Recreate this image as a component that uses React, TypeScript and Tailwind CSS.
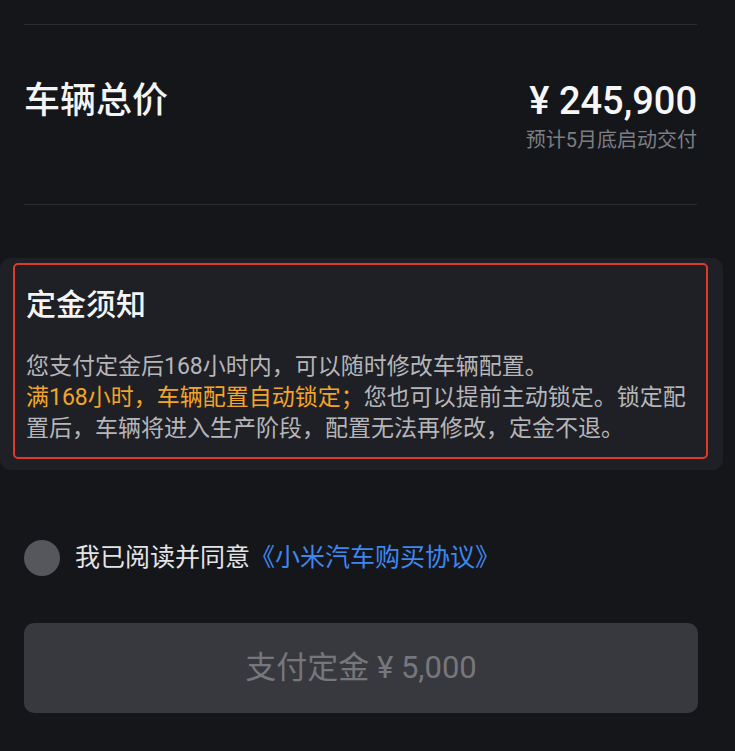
import React from 'react';

const font = { fontFamily: 'Roboto, "Noto Sans CJK SC", sans-serif' };

export default function App() {
  return (
    <div className="min-h-[751px] w-full bg-[#15161a] overflow-hidden" style={font}>
      {/* price summary */}
      <div className="ml-6 w-[673px]">
        <div className="h-px mt-6 bg-[#2a2b30]" />
        <div className="flex items-start justify-between pt-[56px] pb-[52px]">
          <h2 className="text-[36px] leading-[40px] font-medium text-[#f4f4f5]">车辆总价</h2>
          <div className="flex flex-col items-end">
            <div className="text-[38px] leading-[40px] font-medium text-[#f7f7f8]">¥ 245,900</div>
            <div className="mt-[7px] text-[20px] leading-[24px] text-[#7d7e83]">预计5月底启动交付</div>
          </div>
        </div>
        <div className="h-px bg-[#2a2b30]" />
      </div>

      {/* deposit notice */}
      <div className="mt-[53px] w-[723px] rounded-[10px] bg-[#1f2025] pt-[5px] pl-[13px] pr-[15px] pb-[11px]">
        <div className="rounded-[5px] border-2 border-[#e03a27] pl-[11px] pr-[10px] pt-[22px] pb-[13px]">
          <h3 className="text-[30px] leading-[36px] font-medium text-[#f4f4f5]">定金须知</h3>
          <div className="mt-[28px] text-[23px] leading-[31px] text-[#b6b6ba]">
            <p>您支付定金后168小时内，可以随时修改车辆配置。</p>
            <p>
              <span className="text-[#f2a52a]">满168小时，车辆配置自动锁定；</span>您也可以提前主动锁定。锁定配置后，车辆将进入生产阶段，配置无法再修改，定金不退。
            </p>
          </div>
        </div>
      </div>

      {/* agreement */}
      <div className="ml-6 mt-[70px] flex items-center gap-[15px]">
        <button className="h-9 w-9 rounded-full bg-[#56575c]" />
        <p className="text-[25px] leading-[36px] text-[#e4e4e6]">
          我已阅读并同意<span className="text-[#3d87f0]">《小米汽车购买协议》</span>
        </p>
      </div>

      {/* pay button */}
      <button className="ml-6 mt-[47px] flex h-[90px] w-[674px] items-center justify-center rounded-[10px] bg-[#38393e] text-[31px] text-[#76777c]">
        支付定金 ¥ 5,000
      </button>
    </div>
  );
}
